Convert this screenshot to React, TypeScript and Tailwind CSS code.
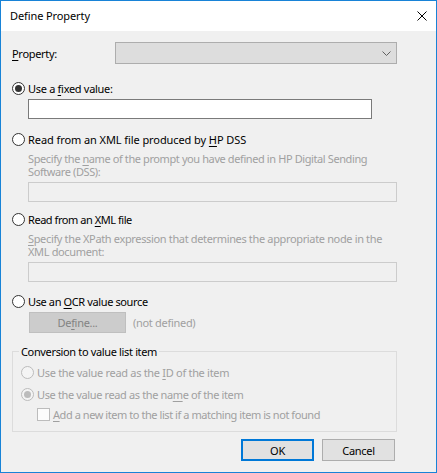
import React from "react";

const FONT = '"Noto Sans", "Liberation Sans", sans-serif';

function Radio({ checked = false, disabled = false }: { checked?: boolean; disabled?: boolean }) {
  return (
    <div
      className={
        "w-[13px] h-[13px] shrink-0 rounded-full border flex items-center justify-center " +
        (disabled ? "border-[#bcbcbc] bg-[#f4f4f4]" : "border-[#333333] bg-white")
      }
    >
      {checked && (
        <div className={"w-[7px] h-[7px] rounded-full " + (disabled ? "bg-[#bcbcbc]" : "bg-[#333333]")} />
      )}
    </div>
  );
}

function U({ children }: { children: React.ReactNode }) {
  return <span className="underline underline-offset-[2px] decoration-[1px]">{children}</span>;
}

export default function App() {
  return (
    <div
      className="w-[437px] h-[473px] border border-[#1883d7] flex flex-col text-[11px] tracking-[-0.3px] text-black"
      style={{ fontFamily: FONT }}
    >
      {/* Title bar */}
      <div className="h-[30px] bg-white flex items-center justify-between pl-[9px] pr-[9px]">
        <span className="leading-[14px] tracking-[-0.1px]">Define Property</span>
        <svg width="10" height="10" viewBox="0 0 10 10" className="block">
          <path d="M0.5 0.5 L9.5 9.5 M9.5 0.5 L0.5 9.5" stroke="#000" strokeWidth="1" />
        </svg>
      </div>

      {/* Body */}
      <div className="flex-1 bg-[#f0f0f0] flex flex-col pl-[11px] leading-[13px]">
        {/* Property row */}
        <div className="mt-[11px] h-[22px] flex items-center">
          <span className="w-[103px]">
            <U>P</U>roperty:
          </span>
          <div className="w-[282px] h-[22px] bg-[#dddddd] border border-[#adadad] flex items-center justify-end pr-[5px]">
            <svg width="9" height="5" viewBox="0 0 9 5" className="block">
              <path d="M0.5 0.5 L4.5 4.5 L8.5 0.5" stroke="#606060" strokeWidth="1" fill="none" />
            </svg>
          </div>
        </div>

        {/* Use a fixed value */}
        <div className="mt-[18px] h-[13px] flex items-center">
          <Radio checked />
          <span className="ml-[3px]">
            Use a <U>f</U>ixed value:
          </span>
        </div>
        <div className="mt-[4px] ml-[16px] w-[344px] h-[20px] bg-white border border-[#7a7a7a]" />

        {/* HP DSS */}
        <div className="mt-[14px] h-[13px] flex items-center">
          <Radio />
          <span className="ml-[3px] tracking-[-0.08px]">
            Read from an XML file produced by <U>H</U>P DSS
          </span>
        </div>
        <div className="mt-[6px] ml-[16px] flex flex-col text-[#a0a0a0] whitespace-nowrap tracking-[-0.4px]">
          <div className="h-[13px]">
            Specify the <U>n</U>ame of the prompt you have defined in HP Digital Sending
          </div>
          <div className="h-[13px]">Software (DSS):</div>
        </div>
        <div className="mt-[4px] ml-[16px] w-[369px] h-[20px] border border-[#cccccc] bg-[#f0f0f0]" />

        {/* XML file */}
        <div className="mt-[11px] h-[13px] flex items-center">
          <Radio />
          <span className="ml-[3px] tracking-[-0.45px]">
            Read from an <U>X</U>ML file
          </span>
        </div>
        <div className="mt-[6px] ml-[16px] flex flex-col text-[#a0a0a0] whitespace-nowrap tracking-[-0.35px]">
          <div className="h-[13px]">
            <U>S</U>pecify the XPath expression that determines the appropriate node in the
          </div>
          <div className="h-[13px]">XML document:</div>
        </div>
        <div className="mt-[4px] ml-[16px] w-[369px] h-[20px] border border-[#cccccc] bg-[#f0f0f0]" />

        {/* OCR */}
        <div className="mt-[13px] h-[13px] flex items-center">
          <Radio />
          <span className="ml-[3px] tracking-[-0.38px]">
            Use an <U>O</U>CR value source
          </span>
        </div>
        <div className="mt-[4px] h-[21px] flex items-center">
          <div className="ml-[17px] w-[97px] h-[21px] bg-[#cccccc] border border-[#bfbfbf] flex items-center justify-center text-[#838383]">
            <span>
              De<U>f</U>ine...
            </span>
          </div>
          <span className="ml-[7px] text-[#a0a0a0]">(not defined)</span>
        </div>

        {/* Group box */}
        <div className="relative mt-[18px] w-[385px] h-[81px] border border-[#dcdcdc] flex flex-col pl-[8px]">
          <span className="absolute left-[6px] -top-[7px] bg-[#f0f0f0] px-[2px] leading-[13px] tracking-[-0.35px]">
            Conversion to value list item
          </span>
          <div className="mt-[14px] h-[13px] flex items-center text-[#a0a0a0]">
            <Radio disabled />
            <span className="ml-[3px]">
              Use the value read as the <U>I</U>D of the item
            </span>
          </div>
          <div className="mt-[9px] h-[13px] flex items-center text-[#a0a0a0]">
            <Radio disabled checked />
            <span className="ml-[3px] tracking-[-0.37px]">
              Use the value read as the na<U>m</U>e of the item
            </span>
          </div>
          <div className="mt-[7px] ml-[16px] h-[13px] flex items-center text-[#a0a0a0]">
            <div className="w-[13px] h-[13px] shrink-0 border border-[#bcbcbc] bg-[#fcfcfc]" />
            <span className="ml-[3px] tracking-[-0.44px]">
              <U>A</U>dd a new item to the list if a matching item is not found
            </span>
          </div>
        </div>

        {/* Buttons */}
        <div className="mt-[7px] flex justify-end pr-[41px] gap-[8px]">
          <div className="w-[73px] h-[22px] bg-[#e1e1e1] border-2 border-[#0078d7] flex items-center justify-center">
            OK
          </div>
          <div className="w-[73px] h-[22px] bg-[#e1e1e1] border border-[#adadad] flex items-center justify-center">
            Cancel
          </div>
        </div>
      </div>
    </div>
  );
}
